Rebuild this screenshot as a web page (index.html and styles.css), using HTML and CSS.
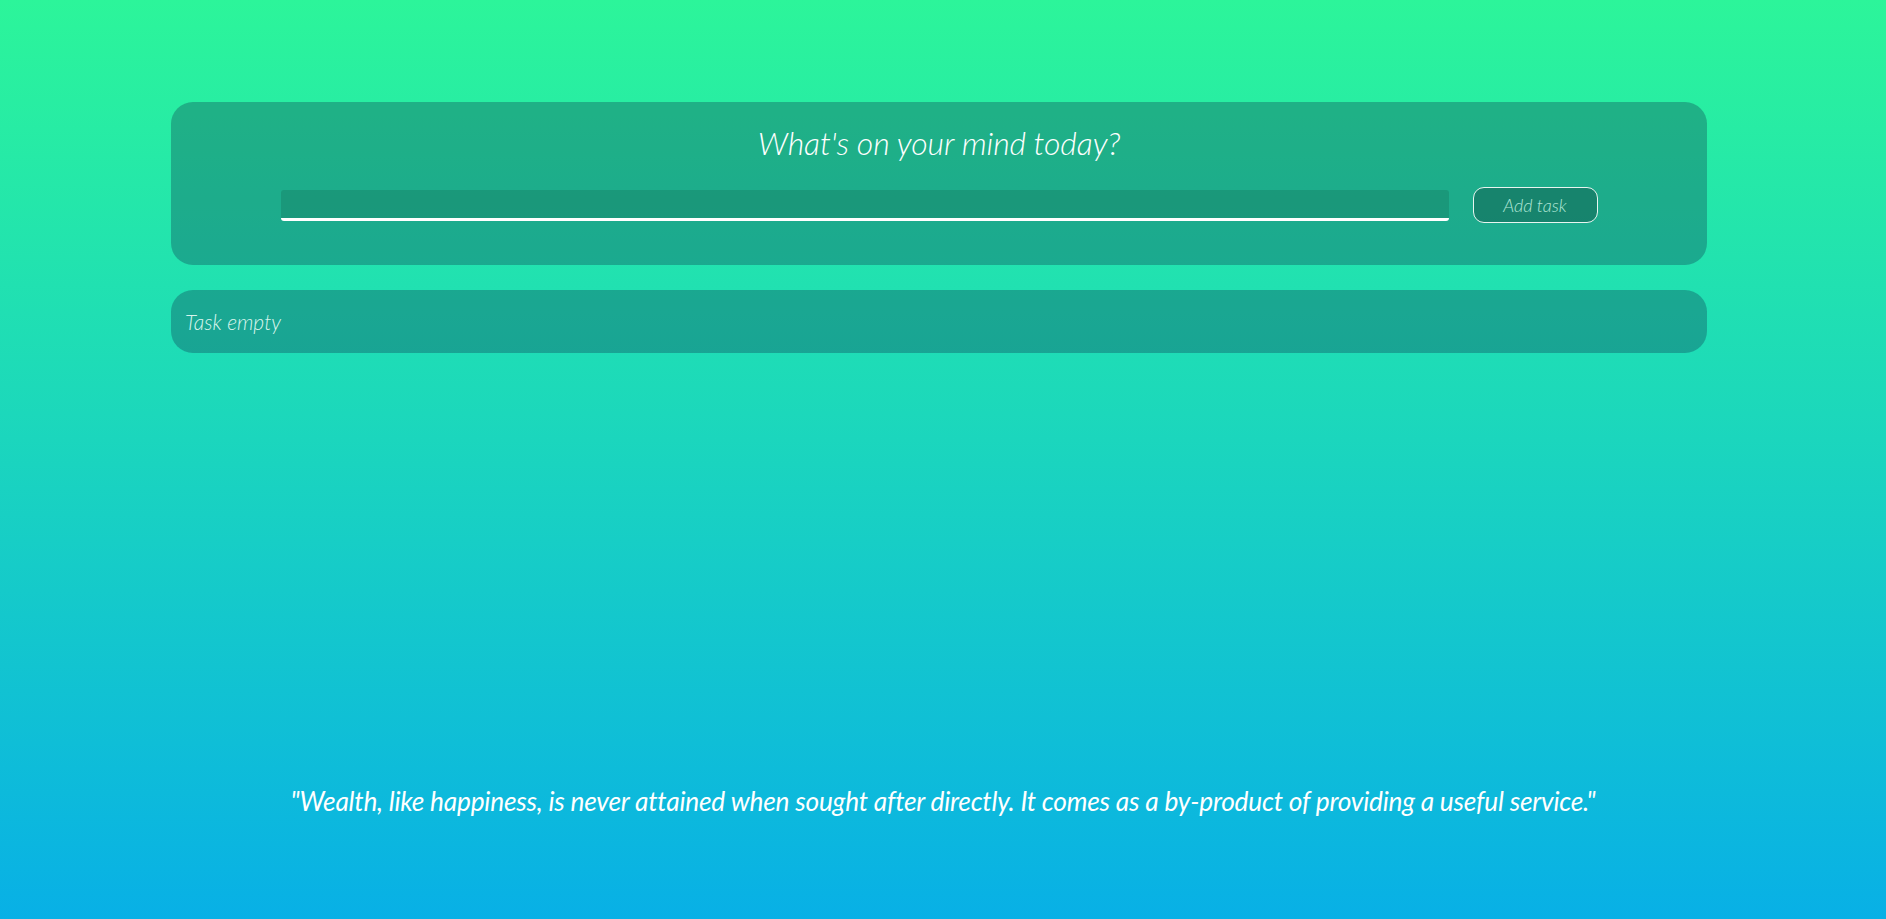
FILE: index.html
```html
<!DOCTYPE html>
<html>
<head>
<meta charset="utf-8">
<link rel="stylesheet" href="styles.css">
</head>
<body>
<div class="page">
  <main class="wrap">
    <section class="card composer">
      <h1 class="title">What's on your mind today?</h1>
      <div class="row">
        <input class="task-input" type="text">
        <button class="add-btn">Add task</button>
      </div>
    </section>
    <section class="card list">
      <p class="empty">Task empty</p>
    </section>
  </main>
  <footer class="quote">"Wealth, like happiness, is never attained when sought after directly. It comes as a by-product of providing a useful service."</footer>
</div>
</body>
</html>
```
FILE: styles.css
```css
html, body {
  margin: 0;
  padding: 0;
  height: 100%;
}
body {
  background: linear-gradient(to bottom, #2cf59a 0%, #1cd8bb 45%, #08b0e6 100%);
  font-family: "Lato", "Open Sans", sans-serif;
  color: #fff;
}
.page {
  height: 919px;
  display: flex;
  flex-direction: column;
  box-sizing: border-box;
  padding-top: 102px;
}
.wrap {
  width: 1536px;
  margin-left: 171px;
  display: flex;
  flex-direction: column;
  gap: 25px;
}
.card {
  background: rgba(10, 22, 60, 0.28);
  border-radius: 22px;
}
.composer {
  height: 163px;
  box-sizing: border-box;
  padding-top: 22px;
  display: flex;
  flex-direction: column;
  align-items: center;
}
.title {
  margin: 0;
  font-size: 32px;
  font-weight: 300;
  font-style: italic;
  line-height: 38px;
  letter-spacing: -0.1px;
}
.row {
  margin-top: 25px;
  display: flex;
  align-items: center;
  gap: 24px;
}
.task-input {
  width: 1168px;
  height: 31px;
  box-sizing: border-box;
  border: none;
  border-bottom: 3px solid #fff;
  border-radius: 3px;
  background: rgba(10, 50, 40, 0.16);
  outline: none;
  color: #fff;
  font-family: inherit;
}
.add-btn {
  width: 125px;
  height: 36px;
  box-sizing: border-box;
  border: 1px solid #e8f5f0;
  border-radius: 11px;
  background: rgba(10, 40, 40, 0.3);
  color: #b0e6d6;
  font-family: inherit;
  font-size: 18px;
  font-weight: 300;
  font-style: italic;
  cursor: pointer;
}
.list {
  height: 63px;
  display: flex;
  align-items: center;
  padding-left: 14px;
  box-sizing: border-box;
}
.empty {
  margin: 0;
  font-size: 21px;
  font-weight: 300;
  font-style: italic;
  color: #d8f4ec;
}
.quote {
  margin-top: auto;
  margin-bottom: 103px;
  text-align: center;
  font-size: 26.3px;
  font-weight: 400;
  font-style: italic;
  line-height: 30px;
  letter-spacing: -0.22px;
}
```
